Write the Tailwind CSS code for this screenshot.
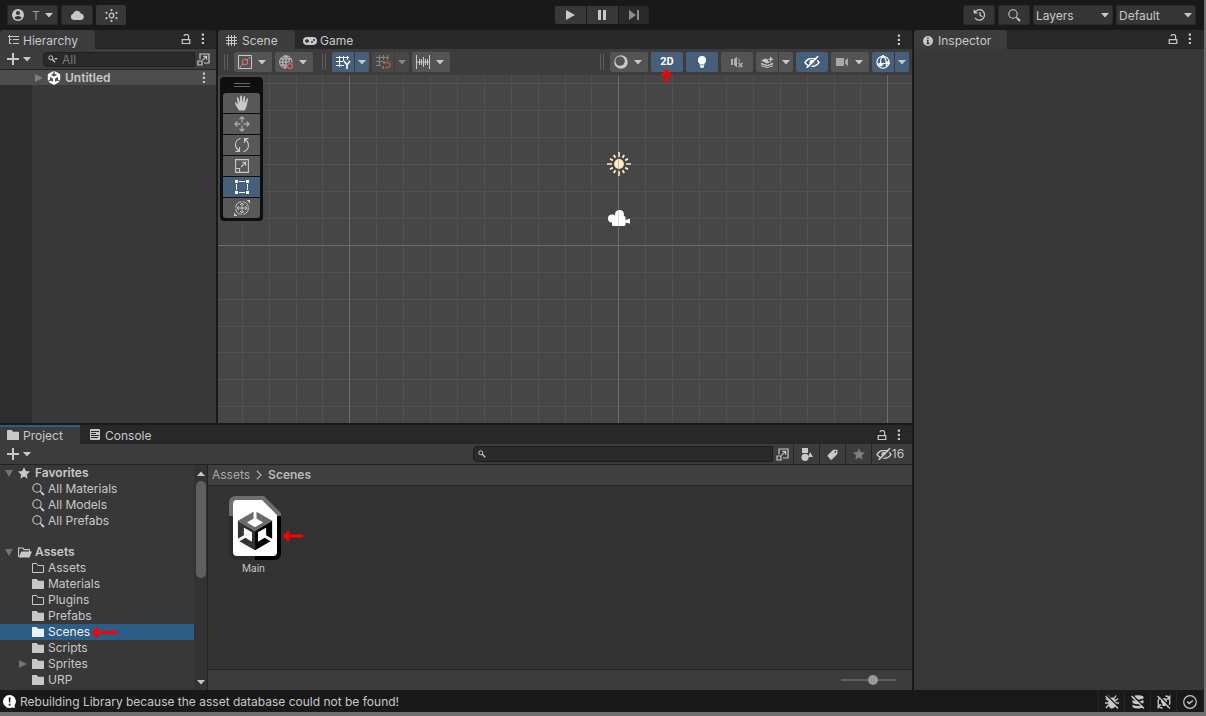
<!DOCTYPE html>
<html lang="en">
<head>
<meta charset="utf-8">
<title>Scene Editor</title>
<script src="https://cdn.jsdelivr.net/npm/@tailwindcss/browser@4"></script>
</head>
<body class="h-screen overflow-hidden bg-[#6e6e6e] font-['Inter',sans-serif] text-[12px] leading-4 text-[#c8c8c8]">
<svg width="0" height="0" class="absolute" aria-hidden="true">
  <defs>
    <symbol id="caret" viewBox="0 0 8 5"><path d="M0 0h8L4 4.6z" fill="currentColor"/></symbol>
    <symbol id="dots" viewBox="0 0 4 12"><path d="M.8.5h2.2v2.2H.8zM.8 4.7h2.2v2.2H.8zM.8 8.9h2.2v2.2H.8z" fill="currentColor"/></symbol>
    <symbol id="lock" viewBox="0 0 10 12"><path d="M1.2 6.6h7.6v3.9H1.2zM7.6 6.4V3.4Q7.6 1.6 5.9 1.6H4.6Q3 1.6 3 3.2" fill="none" stroke="currentColor" stroke-width="1.2"/></symbol>
    <symbol id="plus" viewBox="0 0 12 12"><path d="M6 0v12M0 6h12" stroke="currentColor" stroke-width="2"/></symbol>
    <symbol id="mag" viewBox="0 0 13 13"><circle cx="5" cy="5" r="4.2" fill="none" stroke="currentColor" stroke-width="1.1"/><path d="M8 8l1.4 1.4" stroke="currentColor" stroke-width="1.1"/><path d="M9.2 9.2l2.8 2.8" stroke="currentColor" stroke-width="2"/></symbol>
    <symbol id="magsm" viewBox="0 0 8 8"><circle cx="2.800" cy="2.800" r="2" fill="none" stroke="currentColor"/><path d="M4.300 4.300L7.300 7.300" stroke="currentColor" stroke-width="1.300"/></symbol>
    <symbol id="pop" viewBox="0 0 13 13"><path d="M3 6.2V1h9v9H7M1 8h4v4H1z" fill="none" stroke="currentColor" stroke-width="1.2"/><path d="M5.4 7.4L9.6 3.4M6.2 3.4h3.4v3.4" fill="none" stroke="currentColor" stroke-width="1.2"/></symbol>
    <symbol id="folder" viewBox="0 0 13 11"><path d="M0 1Q0 0 .8 0H4.700L6 1.800h5.300q.7 0 .7.7v6.800q0 .7-.7.7H.7q-.7 0-.7-.7z" fill="currentColor"/></symbol>
    <symbol id="folderline" viewBox="0 0 13 11"><path d="M.500.500h4.200L5.900 2.500h5.600v7H.500z" fill="none" stroke="currentColor"/></symbol>
    <symbol id="star" viewBox="0 0 12 12"><path d="M6 .2l1.8 3.9 4.2.4-3.2 2.9.9 4.3L6 9.4l-3.7 2.3.9-4.3L0 4.500l4.2-.4z" fill="currentColor"/></symbol>
    <mask id="slashgap"><rect width="16" height="12" fill="#fff"/><path d="M4.300 12.500L15 1.700" stroke="#000" stroke-width="1.400"/></mask>
    <symbol id="eyeoff" viewBox="0 0 16 12"><g mask="url(#slashgap)"><path d="M1 6.600C3 3.400 5.600 2.300 8 2.300s5 1.100 7 4.300C13 9.300 10.500 10.300 8 10.300s-5-1-7-3.700z" fill="none" stroke="currentColor" stroke-width="1.500"/><circle cx="8" cy="6.200" r="2.500" fill="currentColor"/></g><path d="M2.500 12L14 .3" stroke="currentColor" stroke-width="1.600"/></symbol>
    <symbol id="cube" viewBox="0 0 24 24"><path d="M12.93 4.290l3.800 2.200c.14.080.14.290 0 .370l-4.520 2.600a.42.42 0 0 1-.42 0L7.270 6.850c-.14-.07-.14-.290 0-.370l3.800-2.190V0L1.380 5.600v11.190l3.710-2.140v-4.390c0-.16.180-.27.320-.18l4.520 2.600c.13.080.21.220.21.370v5.210c0 .16-.18.270-.32.180l-3.800-2.190-3.710 2.150L12 24l9.700-5.600-3.720-2.150-3.800 2.200c-.13.080-.32-.03-.32-.190v-5.210c0-.15.090-.29.220-.37l4.510-2.600c.14-.08.330.02.320.180v4.390l3.720 2.140V5.600L12.930 0z" fill="currentColor"/></symbol>
    <clipPath id="facetop"><path d="M0 4.800L12 12 24 4.800V0H0z"/></clipPath>
    <clipPath id="faceleft"><path d="M0 4.800L12 12v12H0z"/></clipPath>
    <clipPath id="faceright"><path d="M24 4.800L12 12v12h12z"/></clipPath>
    <symbol id="grip" viewBox="0 0 4 16"><path d="M.5 0v16M3.500 0v16" stroke="#5f5f5f"/></symbol>
  </defs>
</svg>

<div class="flex h-full flex-col pr-[2px] pb-1">
<div class="flex min-h-0 flex-1 flex-col bg-[#191919]">

  <header class="grid h-[30px] shrink-0 grid-cols-[1fr_auto_1fr] items-center pr-2 pl-[7px]">
    <div class="flex gap-[3px]">
      <button aria-label="Account" class="flex h-5 w-[51px] items-center rounded-[2px] border border-[#2a2a2a] bg-[#353535] pr-1 pl-1">
        <svg class="size-3" viewBox="0 0 12 12"><circle cx="6" cy="6" r="6" fill="#c8c8c8"/><circle cx="6" cy="4" r="2.100" fill="#353535"/><path d="M2.300 8.900Q3 6.900 6 6.900t3.700 2Q8 10.600 6 10.600T2.300 8.900z" fill="#353535"/></svg>
        <span class="mr-auto ml-2 pt-0.5 text-[#9a9a9a]">T</span><svg class="h-[5px] w-2"><use href="#caret"/></svg>
      </button>
      <button aria-label="Cloud" class="flex h-5 w-8 items-center justify-center rounded-[2px] border border-[#2a2a2a] bg-[#353535]">
        <svg class="h-3 w-[15px]" viewBox="0 0 15 12"><path d="M3.500 11A3.200 3.200 0 0 1 3 4.800 4.300 4.300 0 0 1 11 4.400 3.400 3.400 0 0 1 11.500 11z" fill="currentColor"/></svg>
      </button>
      <button aria-label="Settings" class="flex h-5 w-[30px] items-center justify-center rounded-[2px] bg-[#383838]">
        <svg class="size-[13px]" viewBox="0 0 13 13" fill="currentColor"><circle cx="6.500" cy="6.500" r="2.300" fill="none" stroke="currentColor" stroke-width="1.300"/><circle cx="6.500" cy="1.100" r="1.100"/><circle cx="6.500" cy="11.900" r="1.100"/><circle cx="1.500" cy="3.800" r="1.100"/><circle cx="11.500" cy="3.800" r="1.100"/><circle cx="1.500" cy="9.200" r="1.100"/><circle cx="11.500" cy="9.200" r="1.100"/></svg>
      </button>
    </div>
    <div class="flex gap-px">
      <button aria-label="Play" class="flex h-[18px] w-[31px] items-center justify-center rounded-l-[2px] bg-[#383838]"><svg class="h-2.5 w-[9px]" viewBox="0 0 9 10"><path d="M0 0l9 5-9 5z" fill="currentColor"/></svg></button>
      <button aria-label="Pause" class="flex h-[18px] w-[31px] items-center justify-center bg-[#383838]"><svg class="h-2.5 w-[9px]" viewBox="0 0 9 10"><path d="M0 0h3v10H0zM5 0h3v10H5z" fill="currentColor"/></svg></button>
      <button aria-label="Step" class="flex h-[18px] w-[30px] items-center justify-center rounded-r-[2px] bg-[#2a2a2a] text-[#8c8c8c]"><svg class="h-2.5 w-2.5" viewBox="0 0 10 10"><path d="M0 0l7 5-7 5zM8 0h2v10H8z" fill="currentColor"/></svg></button>
    </div>
    <div class="flex justify-end gap-[3px]">
      <button aria-label="History" class="flex h-5 w-8 items-center justify-center rounded-[2px] border border-[#2a2a2a] bg-[#353535]">
        <svg class="h-3 w-[13px]" viewBox="0 0 13 12" fill="none" stroke="currentColor" stroke-width="1.300"><path d="M1.800 3.400A5.200 5.200 0 1 1 2 8.800M1.300.8v3h3.200M7 3v3.200l2.400 1.500"/></svg>
      </button>
      <button aria-label="Search" class="flex h-5 w-8 items-center justify-center rounded-[2px] border border-[#2a2a2a] bg-[#353535]"><svg class="size-[13px]"><use href="#mag"/></svg></button>
      <label class="relative flex h-5 w-20 items-center">
        <select aria-label="Layers" class="h-5 w-full appearance-none rounded-[2px] border border-[#2a2a2a] bg-[#353535] pt-0.5 pl-0.5 text-[12px]"><option>Layers</option></select>
        <svg class="pointer-events-none absolute right-1 h-[5px] w-2"><use href="#caret"/></svg>
      </label>
      <label class="relative flex h-5 w-20 items-center">
        <select aria-label="Layout" class="h-5 w-full appearance-none rounded-[2px] border border-[#2a2a2a] bg-[#353535] pt-0.5 pl-0.5 text-[12px]"><option>Default</option></select>
        <svg class="pointer-events-none absolute right-1 h-[5px] w-2"><use href="#caret"/></svg>
      </label>
    </div>
  </header>

  <main class="flex min-h-0 flex-1 gap-0.5">
    <div class="flex min-w-0 flex-1 flex-col gap-0.5">
      <div class="flex min-h-0 flex-1 gap-0.5">

        <section aria-label="Hierarchy" class="flex w-[216px] shrink-0 flex-col overflow-hidden rounded-t-[3px] bg-[#383838]">
          <div class="flex h-[19px] shrink-0 items-stretch bg-[#282828]">
            <h2 class="flex w-[95px] items-center gap-1 rounded-t-[3px] bg-[#3c3c3c] pt-0.5 pl-2">
              <svg class="mb-0.5 h-2.5 w-[11px]" viewBox="0 0 11 10" fill="none" stroke="currentColor"><path d="M3 1.500h8M5 4.500h6M5 8.500h6M1.500 0v9M0 1.500h3M1.500 4.500h2M1.500 8.500h2"/></svg>Hierarchy</h2>
            <div class="flex flex-1 items-center justify-end gap-2.5 border-b border-[#232323] pr-[11px]">
              <button aria-label="Lock hierarchy"><svg class="h-3 w-2.5"><use href="#lock"/></svg></button>
              <button aria-label="Hierarchy menu"><svg class="h-3 w-1"><use href="#dots"/></svg></button>
            </div>
          </div>
          <div class="flex h-[21px] shrink-0 items-center border-b border-[#232323] bg-[#3c3c3c] pr-1 pl-[7px]">
            <button aria-label="Create" class="flex items-center gap-1"><svg class="size-3"><use href="#plus"/></svg><svg class="h-[5px] w-2"><use href="#caret"/></svg></button>
            <label class="ml-3 flex h-[15px] min-w-0 flex-1 items-center gap-0.5 rounded-l-[4px] border border-[#212121] bg-[#2a2a2a] pl-1">
              <svg class="h-2 w-2.5 shrink-0" viewBox="0 0 10 8"><circle cx="2.800" cy="2.800" r="2" fill="none" stroke="currentColor"/><path d="M4.300 4.300l2.700 3" stroke="currentColor" stroke-width="1.300"/><path d="M6.200 3h3.600L8 5z" fill="currentColor"/></svg>
              <input aria-label="Search hierarchy" placeholder="All" class="w-full min-w-0 bg-transparent pl-0.5 leading-3 outline-none placeholder:text-[#7a7a7a]">
            </label>
            <button aria-label="Open search" class="flex h-[15px] w-[17px] items-center justify-center"><svg class="size-[13px]"><use href="#pop"/></svg></button>
          </div>
          <div class="flex h-[15px] shrink-0 items-center bg-[#4d4d4d] pr-2.5 pl-[35px] font-semibold">
            <svg class="h-2 w-2" viewBox="0 0 8 8"><path d="M0 0l8 4-8 4z" fill="#7c7c7c"/></svg>
            <svg class="mr-1 ml-1 size-3.5 text-white"><use href="#cube"/></svg>
            <span class="flex-1">Untitled</span>
            <button aria-label="Scene menu"><svg class="h-3 w-1"><use href="#dots"/></svg></button>
          </div>
          <div class="w-8 flex-1 bg-[#2d2d2d]"></div>
        </section>

        <section aria-label="Scene view" class="flex min-w-0 flex-1 flex-col overflow-hidden rounded-t-[3px] bg-[#464646]">
          <div class="flex h-[19px] shrink-0 items-stretch bg-[#282828]">
            <h2 class="flex w-[77px] items-center gap-[5px] rounded-t-[3px] bg-[#3c3c3c] pt-0.5 pl-2"><svg class="size-[11px]" viewBox="0 0 11 11"><path d="M2.500 0v11M5.500 0v11M8.500 0v11M0 2.500h11M0 5.500h11M0 8.500h11" stroke="currentColor"/></svg>Scene</h2>
            <button class="flex items-center gap-[3px] pt-0.5 pl-2"><svg class="h-2 w-3.5" viewBox="0 0 14 8"><rect width="14" height="8" rx="4" fill="currentColor"/><path d="M4 2v4M2 4h4" stroke="#282828" stroke-width="1.300"/><circle cx="9" cy="5" r=".9" fill="#282828"/><circle cx="11" cy="3" r=".9" fill="#282828"/></svg>Game</button>
            <button aria-label="Scene view menu" class="mr-[11px] ml-auto"><svg class="h-3 w-1"><use href="#dots"/></svg></button>
          </div>
          <div class="flex h-[26px] shrink-0 items-center gap-[3px] bg-[#3c3c3c] pr-[3px] pl-1.5">
            <svg class="mr-[3px] h-4 w-1"><use href="#grip"/></svg>
            <button aria-label="Tool handle position" class="flex h-5 w-[38px] items-center gap-1.5 rounded-[2px] bg-[#545454] pl-1"><svg class="size-3.5" viewBox="0 0 14 14" fill="none" stroke="currentColor"><path d="M.500.500h13v13H.500z"/><path d="M2 12l3-3M9 5l3-3" stroke-dasharray="1.500 1"/><circle cx="7" cy="7" r="2.600" stroke="#e8694a" stroke-width="1.200"/></svg><svg class="h-[5px] w-2"><use href="#caret"/></svg></button>
            <button aria-label="Tool handle rotation" class="flex h-5 w-[38px] items-center gap-1.5 rounded-[2px] bg-[#545454] pl-1"><svg class="size-3.5" viewBox="0 0 14 14" fill="none" stroke="currentColor"><path d="M13 7.500A6.200 6.200 0 1 0 7 13.200M7 .8Q3.500 3 3.500 7T7 13.200M7 .8q3.200 2.200 3.500 6M7 .8v12M1.500 4h11M.8 7h9.500M1.500 10H7"/><circle cx="11" cy="11" r="2.400" stroke="#e8694a" stroke-width="1.200"/></svg><svg class="h-[5px] w-2"><use href="#caret"/></svg></button>
            <svg class="mr-[3px] ml-1.5 h-4 w-1 shrink-0"><use href="#grip"/></svg>
            <div class="flex h-5 gap-px">
              <button aria-label="Grid" class="flex w-[22px] items-center justify-center rounded-l-[2px] bg-[#46607c] text-white"><svg class="h-3.5 w-[15px]" viewBox="0 0 15 14" fill="none" stroke="currentColor"><path d="M3.500 1v11M7.500 1v5M11.500 1v4M0 2.500h13M0 6.500h7M0 10.500h8"/><path d="M8 6l3 4 3-4M11 10v4" stroke-width="1.600"/></svg></button>
              <button aria-label="Grid options" class="flex w-3.5 items-center justify-center rounded-r-[2px] bg-[#46607c]"><svg class="h-[5px] w-2"><use href="#caret"/></svg></button>
            </div>
            <div class="flex h-5 gap-px">
              <button aria-label="Snapping" class="flex w-[22px] items-center justify-center rounded-l-[2px] bg-[#484848] text-[#858585]"><svg class="h-3.5 w-[15px]" viewBox="0 0 15 14" fill="none" stroke="currentColor"><path d="M3.500 0v11M7.500 0v5M11.500 0v5M0 2.500h13M0 6.500h7M0 10.500h5"/><path d="M7 7.500h2M6 12.500h2" stroke-width="2"/><path d="M9 7.500h2.500a2.500 2.500 0 0 1 0 5H9" stroke="#a8523c" stroke-width="1.800"/></svg></button>
              <button aria-label="Snapping options" class="flex w-3.5 items-center justify-center rounded-r-[2px] bg-[#484848] text-[#858585]"><svg class="h-[5px] w-2"><use href="#caret"/></svg></button>
            </div>
            <button aria-label="Snap increment" class="flex h-5 w-[38px] items-center gap-1.5 rounded-[2px] bg-[#545454] pl-1"><svg class="h-3.5 w-3.5" viewBox="0 0 14 14"><path d="M.500 0v14M13.500 0v14M3.500 4v6M5.500 4v6M7.500 2v10M9.500 4v6M11.500 4v6M0 7h14" stroke="currentColor"/></svg><svg class="h-[5px] w-2"><use href="#caret"/></svg></button>

            <svg class="mr-[3px] ml-auto h-4 w-1"><use href="#grip"/></svg>
            <button aria-label="Draw mode" class="flex h-5 w-[38px] items-center gap-1.5 rounded-[2px] bg-[#545454] pl-1"><svg class="size-3.5" viewBox="0 0 14 14"><circle cx="7" cy="7" r="6.800" fill="#c8c8c8"/><circle cx="6.100" cy="6.100" r="4.700" fill="#545454"/></svg><svg class="h-[5px] w-2"><use href="#caret"/></svg></button>
            <button class="relative h-5 w-8 rounded-[2px] bg-[#46607c] font-['Roboto',sans-serif] text-[11px] font-bold text-white">2D
              <svg class="absolute top-[17px] left-2.5 z-10 h-3.5 w-3" viewBox="0 0 12 14" fill="none" stroke="#fe0000" stroke-width="2.800"><path d="M5.500 14V2.500M1 6.500L5.500 2l4.500 4.500" stroke-linejoin="round"/></svg></button>
            <button aria-label="Scene lighting" class="flex h-5 w-8 items-center justify-center rounded-[2px] bg-[#46607c] text-white"><svg class="h-3 w-2" viewBox="0 0 8 12"><path d="M4 0a4 4 0 0 1 2.600 7.200V8.600H1.400V7.200A4 4 0 0 1 4 0zM2 9.300h4v1.200L5 12H3l-1-1.500z" fill="currentColor"/></svg></button>
            <button aria-label="Scene audio" class="flex h-5 w-8 items-center justify-center rounded-[2px] bg-[#545454] text-[#b0b0b0]"><svg class="h-3 w-3" viewBox="0 0 12 12" fill="none" stroke="currentColor"><path d="M0 3h2v6H0zM3 3L6 .8v10.400L3 9z" fill="currentColor" stroke="none"/><path d="M7.300 2.500q1.600 1.300 1 3.500" /><path d="M7.500 6.800l4 4.500M11.500 6.800l-4 4.500" stroke-width="1.400"/></svg></button>
            <div class="flex h-5 gap-px">
              <button aria-label="Effects" class="flex w-[22px] items-center justify-center rounded-l-[2px] bg-[#545454]"><svg class="h-3 w-[13px]" viewBox="0 0 13 12"><path d="M0 4.500L4.500 2.500 6.500 3.300 7.500 5.500 10 6 6 7.500zM0 6.700l6 2.400 6-2.400v1.500l-6 2.300L0 8.200zM0 9.200l6 2 6-2v1L6 12 0 10.200zM9.800 0l.9 2.400 2.300.8-2.300.9-.9 2.300-.8-2.300-2.400-.9L9 2.400z" fill="currentColor"/></svg></button>
              <button aria-label="Effects options" class="flex w-3.5 items-center justify-center rounded-r-[2px] bg-[#545454]"><svg class="h-[5px] w-2"><use href="#caret"/></svg></button>
            </div>
            <button aria-label="Scene visibility" class="flex h-5 w-8 items-center justify-center rounded-[2px] bg-[#46607c] text-white"><svg class="h-3 w-4"><use href="#eyeoff"/></svg></button>
            <button aria-label="Camera" class="flex h-5 w-[38px] items-center gap-1.5 rounded-[2px] bg-[#545454] pl-[5px]"><svg class="h-2 w-[13px] text-[#a8a8a8]" viewBox="0 0 13 8"><path d="M0 0h8v8H0zM9 2.500l3-2.500v8L9 5.500z" fill="currentColor"/></svg><svg class="h-[5px] w-2"><use href="#caret"/></svg></button>
            <div class="flex h-5 gap-px">
              <button aria-label="Gizmos" class="flex w-[22px] items-center justify-center rounded-l-[2px] bg-[#46607c] text-white"><svg class="h-3.5 w-3.5" viewBox="0 0 14 14" fill="none" stroke="currentColor" stroke-width="1.100"><circle cx="7" cy="7.200" r="6"/><path d="M7 1Q3.500 4 5 9M7 1q4 3 3.300 10M1 8.500Q6 10.500 13 6.500"/><circle cx="7" cy="1.500" r="1.500" fill="currentColor" stroke="none"/><circle cx="4.800" cy="9.500" r="1.900" fill="currentColor" stroke="none"/><circle cx="12.300" cy="8" r="1.600" fill="currentColor" stroke="none"/></svg></button>
              <button aria-label="Gizmo options" class="flex w-3.5 items-center justify-center rounded-r-[2px] bg-[#46607c]"><svg class="h-[5px] w-2"><use href="#caret"/></svg></button>
            </div>
          </div>

          <div class="relative min-h-0 flex-1 overflow-hidden">
            <!-- Canvas grid: minor lines inside a repeating tile, brighter lines on the tile edge -->
            <svg class="absolute inset-0 size-full" shape-rendering="crispEdges" aria-hidden="true">
              <defs><pattern id="cells" x="131" y="170" width="269" height="269" patternUnits="userSpaceOnUse">
                <path d="M27.500 0v269M54.500 0v269M81.500 0v269M108.500 0v269M135.500 0v269M162.500 0v269M189.500 0v269M216.500 0v269M242.500 0v269M0 27.500h269M0 54.500h269M0 81.500h269M0 107.500h269M0 134.500h269M0 161.500h269M0 188.500h269M0 215.500h269M0 242.500h269" stroke="#515151"/>
                <path d="M.500 0v269M0 .500h269" stroke="#6c6c6c"/></pattern></defs>
              <rect width="100%" height="100%" fill="url(#cells)"/>
            </svg>
            <!-- Light and camera gizmos -->
            <svg class="absolute top-[77px] left-[389px] size-6" viewBox="0 0 24 24"><path d="M12 0v5M12 19v5M0 12h5M19 12h5" stroke="#fcebc4" stroke-width="1.600"/><path d="M18.200 8.400l2.800-1.600M15.600 5.800l1.600-2.800M8.400 5.800L6.800 3M5.800 8.400L3 6.800M5.800 15.600L3 17.200M8.400 18.200l-1.600 2.800M15.600 18.200l1.600 2.800M18.200 15.600l2.800 1.600" stroke="#fcebc4" stroke-width="1.900"/><circle cx="12" cy="12" r="4.900" fill="#fcebc4"/><path d="M11.500 6v12" stroke="#8a8a7c" stroke-opacity=".4"/></svg>
            <svg class="absolute top-[135px] left-[390px] h-4 w-[22px]" viewBox="0 0 22 16" fill="#fff"><circle cx="4" cy="8.500" r="4"/><circle cx="11.500" cy="4.500" r="4.500"/><rect x="4" y="6" width="13.500" height="10" rx="1.500"/><path d="M16 10.500l2-.5 4-1.500v5l-4-.8-2 .3z"/><path d="M10.500 0v16" stroke="#8a8a8a" stroke-opacity=".3"/></svg>

            <div role="toolbar" aria-label="Tools" class="absolute top-0.5 left-0.5 flex w-[43px] flex-col gap-px rounded-[4px] bg-[#0f0f0f] px-[3px] pb-[3px]">
              <svg class="mx-auto mt-1.5 mb-[5px] h-1 w-4" viewBox="0 0 16 4"><path d="M0 .500h16M0 3.500h16" stroke="#666"/></svg>
              <button aria-label="Hand" class="flex h-5 items-center justify-center rounded-t-[3px] bg-[#585858]"><svg class="size-4" viewBox="0 0 16 16"><path d="M5.200 15.500C4 13.500 2 11.500 1 8.300.8 7.300 1.900 6.900 2.400 7.700L4 9.800 2.800 3.200c-.2-1.100 1.300-1.400 1.600-.3L5.900 7.500 6.100 1.300c0-1.200 1.700-1.200 1.800 0L8.300 7.300 9.600 1.800c.3-1.100 1.800-.8 1.600.3L10.700 8l2-4.100c.5-1 1.700-.5 1.400.6C13 8 13 11.500 11.300 14.300L10.900 15.500z" fill="currentColor"/></svg></button>
              <button aria-label="Move" class="flex h-5 items-center justify-center bg-[#585858] text-[#a9a9a9]"><svg class="size-4" viewBox="0 0 16 16" fill="none" stroke="currentColor" stroke-width="1.300"><path d="M8 1v5.500M8 9.500V15M1 8h5.500M9.500 8H15M5.500 3.300L8 .9l2.500 2.400M5.500 12.700L8 15.100l2.500-2.400M3.300 5.500L.9 8l2.400 2.500M12.700 5.500L15.100 8l-2.400 2.500"/></svg></button>
              <button aria-label="Rotate" class="flex h-5 items-center justify-center bg-[#585858]"><svg class="size-4" viewBox="0 0 16 16" fill="none" stroke="currentColor" stroke-width="1.200"><path d="M6.500 1.200C2.500 2.500.8 6 1.800 9.500 2.300 11.200 3.200 12.500 5 13.800M9.500 14.800c4-1.300 5.700-4.800 4.700-8.300-.5-1.700-1.400-3-3.200-4.300M1.500 14.300h4V10M14.500 1.700h-4V6"/></svg></button>
              <button aria-label="Scale" class="flex h-5 items-center justify-center bg-[#585858]"><svg class="size-3.5" viewBox="0 0 14 14" fill="none" stroke="currentColor" stroke-width="1.100"><path d="M.6.6h12.800v12.800H.6zM.6 9.500h4v4M6 8l4.500-4.500M7 3.300h3.700V7"/></svg></button>
              <button aria-label="Rect" aria-pressed="true" class="flex h-5 items-center justify-center bg-[#46607c] text-white"><svg class="size-3.5" viewBox="0 0 14 14"><path d="M0 0h3v3H0zM11 0h3v3h-3zM0 11h3v3H0zM11 11h3v3h-3z" fill="currentColor"/><path d="M4 1.500h6M4 12.500h6M1.500 4v6M12.500 4v6" stroke="currentColor"/></svg></button>
              <button aria-label="Transform" class="flex h-5 items-center justify-center rounded-b-[3px] bg-[#585858]"><svg class="size-4" viewBox="0 0 16 16" fill="none" stroke="currentColor"><circle cx="8" cy="8" r="6.300" stroke-dasharray="8.500 1.400"/><path d="M8 3v10M3 8h10M6 5l2-2 2 2M6 11l2 2 2-2M5 6L3 8l2 2M11 6l2 2-2 2"/><path d="M12.500 0H16v3.500zM0 12.500V16h3.500z" fill="currentColor" stroke="none"/></svg></button>
            </div>
          </div>
        </section>
      </div>

      <section aria-label="Project" class="flex h-[265px] shrink-0 flex-col overflow-hidden rounded-tr-[3px] bg-[#383838]">
        <div class="flex h-[19px] shrink-0 items-stretch bg-[#282828]">
          <h2 class="flex w-20 items-center gap-[3px] border-t-2 border-[#2c5d87] bg-[#3c3c3c] pl-[7px]"><svg class="h-[11px] w-[13px]"><use href="#folder"/></svg>Project</h2>
          <button class="flex items-center gap-1 pt-0.5 pl-2.5"><svg class="mb-0.5 size-[11px]" viewBox="0 0 11 11"><rect width="10" height="11" rx="1" fill="currentColor"/><path d="M1 2.500h8M1 4.500h5M1 6.500h8M1 8.500h7" stroke="#282828"/></svg>Console</button>
          <div class="flex flex-1 items-center justify-end gap-2.5 pr-[11px]">
            <button aria-label="Lock project"><svg class="h-3 w-2.5"><use href="#lock"/></svg></button>
            <button aria-label="Project menu"><svg class="h-3 w-1"><use href="#dots"/></svg></button>
          </div>
        </div>
        <div class="flex h-[21px] shrink-0 items-center border-b border-[#232323] bg-[#3c3c3c] pl-[7px]">
          <button aria-label="Create asset" class="flex items-center gap-1"><svg class="size-3"><use href="#plus"/></svg><svg class="h-[5px] w-2"><use href="#caret"/></svg></button>
          <label class="ml-auto flex h-4 w-[300px] items-center rounded-l-[4px] border border-[#1c1c1c] bg-[#2a2a2a] pl-1"><svg class="size-2 shrink-0"><use href="#magsm"/></svg><input aria-label="Search project" class="w-full min-w-0 bg-transparent leading-3 outline-none"></label>
          <button aria-label="Open project search" class="mr-0.5 flex h-4 w-[18px] items-center justify-center"><svg class="size-[13px]"><use href="#pop"/></svg></button>
          <div class="flex h-full divide-x divide-[#262626] border-l border-[#262626]">
            <button aria-label="Filter by type" class="flex w-[26px] items-center justify-center"><svg class="h-[13px] w-3" viewBox="0 0 12 13" fill="currentColor"><path d="M1 0h6v5H1zM9 4l3 5H7z"/><circle cx="4" cy="9.300" r="3.600"/></svg></button>
            <button aria-label="Filter by label" class="flex w-[26px] items-center justify-center"><svg class="size-[11px]" viewBox="0 0 11 11"><path d="M10.500.8L10.300 5 5 10.600Q4 11 3.200 10.200L.8 7.600Q.2 6.600.8 6L6.200.7z" fill="currentColor"/><circle cx="8.300" cy="2.800" r=".9" fill="#3c3c3c"/></svg></button>
            <button aria-label="Save search" class="flex w-[26px] items-center justify-center text-[#7d7d7d]"><svg class="size-3"><use href="#star"/></svg></button>
            <button aria-label="16 hidden packages" class="flex w-10 items-center justify-center pr-1"><svg class="h-3 w-4"><use href="#eyeoff"/></svg>16</button>
          </div>
        </div>
        <div class="flex min-h-0 flex-1">
          <nav aria-label="Folders" class="w-[194px] shrink-0">
            <ul>
              <li class="flex h-4 items-center pl-[5px] font-semibold"><svg class="h-[7px] w-2" viewBox="0 0 8 7"><path d="M0 0h8L4 7z" fill="#737373"/></svg><svg class="mr-[5px] ml-[5px] size-3"><use href="#star"/></svg>Favorites</li>
              <li class="flex h-4 items-center gap-[3px] pl-8"><svg class="size-[13px]"><use href="#mag"/></svg>All Materials</li>
              <li class="flex h-4 items-center gap-[3px] pl-8"><svg class="size-[13px]"><use href="#mag"/></svg>All Models</li>
              <li class="flex h-4 items-center gap-[3px] pl-8"><svg class="size-[13px]"><use href="#mag"/></svg>All Prefabs</li>
            </ul>
            <ul class="mt-[15px]">
              <li class="flex h-4 items-center pl-[5px] font-semibold"><svg class="h-[7px] w-2" viewBox="0 0 8 7"><path d="M0 0h8L4 7z" fill="#737373"/></svg><svg class="mr-[3px] ml-[5px] h-[11px] w-3.5" viewBox="0 0 14 11"><path d="M.6 10V1H5l1 1.600h5.400V5" fill="none" stroke="currentColor" stroke-width="1.100"/><path d="M3.200 4.500H14L11.500 10.500H.8z" fill="currentColor"/></svg>Assets</li>
              <li class="flex h-4 items-center gap-[3px] pl-8"><svg class="h-[11px] w-[13px]"><use href="#folderline"/></svg>Assets</li>
              <li class="flex h-4 items-center gap-[3px] pl-8"><svg class="h-[11px] w-[13px]"><use href="#folder"/></svg>Materials</li>
              <li class="flex h-4 items-center gap-[3px] pl-8"><svg class="h-[11px] w-[13px]"><use href="#folderline"/></svg>Plugins</li>
              <li class="flex h-4 items-center gap-[3px] pl-8"><svg class="h-[11px] w-[13px]"><use href="#folder"/></svg>Prefabs</li>
              <li class="flex h-4 items-center gap-[3px] bg-[#2c5d87] pl-8 text-[#f0f0f0]"><svg class="h-[11px] w-[13px]"><use href="#folder"/></svg>Scenes<svg class="-ml-0.5 h-3 w-[27px]" viewBox="0 0 27 12" fill="none" stroke="#fe0000" stroke-width="2.800"><path d="M27 6.500H2.500M7 2L2.500 6.500 7 11" stroke-linejoin="round"/></svg></li>
              <li class="flex h-4 items-center gap-[3px] pl-8"><svg class="h-[11px] w-[13px]"><use href="#folder"/></svg>Scripts</li>
              <li class="flex h-4 items-center gap-[3px] pl-[19px]"><svg class="mr-0.5 h-2 w-2" viewBox="0 0 8 8"><path d="M0 0l8 4-8 4z" fill="#737373"/></svg><svg class="h-[11px] w-[13px]"><use href="#folder"/></svg>Sprites</li>
              <li class="flex h-4 items-center gap-[3px] pl-8"><svg class="h-[11px] w-[13px]"><use href="#folder"/></svg>URP</li>
            </ul>
          </nav>
          <div class="flex w-3.5 shrink-0 flex-col items-center border-r border-[#222] bg-[#333] pt-1.5 pb-[5px] pl-px">
            <svg class="h-[5px] w-2 rotate-180"><use href="#caret"/></svg>
            <div class="mt-[5px] h-[97px] w-2.5 rounded-full bg-[#5f5f5f]"></div>
            <svg class="mt-auto h-[5px] w-2"><use href="#caret"/></svg>
          </div>
          <div class="flex min-w-0 flex-1 flex-col bg-[#333]">
            <div class="flex h-[21px] items-center gap-1.5 border-b border-[#262626] bg-[#3f3f3f] pl-1 text-[#a9a9a9]"><a href="#assets">Assets</a><svg class="h-2.5 w-1.5" viewBox="0 0 6 10"><path d="M.8.8L5 5 .8 9.200" fill="none" stroke="currentColor" stroke-width="1.300"/></svg><b class="font-semibold text-[#b8b8b8]">Scenes</b></div>
            <div class="flex-1 pt-2.5 pl-[21px]">
              <div class="flex items-center gap-px">
                <svg class="h-16 w-[52px]" viewBox="0 0 52 64">
                  <path d="M0 20h26v44H7Q0 64 0 57z" fill="#2a2a2a"/>
                  <path d="M26 16h26v41q0 7-7 7H26z" fill="#000"/>
                  <path d="M7 0H35L52 17V20H0V7Q0 0 7 0z" fill="#6e6e6e"/>
                  <path d="M8 4H33L48 19V56q0 4-4 4H8q-4 0-4-4V8q0-4 4-4z" fill="#fff"/>
                  <g clip-path="url(#sheet)">
                    <g transform="translate(6.700 15.700) scale(1.610)">
                      <g clip-path="url(#facetop)" color="#6a6a6a"><use href="#cube" width="24" height="24"/></g>
                      <g clip-path="url(#faceleft)" color="#333"><use href="#cube" width="24" height="24"/></g>
                      <g clip-path="url(#faceright)" color="#000"><use href="#cube" width="24" height="24"/></g>
                    </g>
                  </g>
                  <defs><clipPath id="sheet"><path d="M4 4h44v56H4z"/></clipPath></defs>
                </svg>
                <svg class="mt-4 h-3 w-[21px]" viewBox="0 0 21 12" fill="none" stroke="#fe0000" stroke-width="2.800"><path d="M21 6H2.500M7 1.500L2.500 6 7 10.500" stroke-linejoin="round"/></svg>
              </div>
              <p class="w-[49px] text-center text-[10px]">Main</p>
            </div>
            <div class="flex h-[21px] items-center justify-end border-t border-[#262626] bg-[#3c3c3c] pr-4">
              <input type="range" aria-label="Icon size" min="0" max="100" value="60" class="h-2.5 w-[55px] appearance-none bg-[linear-gradient(#5e5e5e,#5e5e5e)] bg-[length:100%_2px] bg-center bg-no-repeat [&::-webkit-slider-thumb]:size-2.5 [&::-webkit-slider-thumb]:appearance-none [&::-webkit-slider-thumb]:rounded-full [&::-webkit-slider-thumb]:bg-[#999]">
            </div>
          </div>
        </div>
      </section>
    </div>

    <section aria-label="Inspector" class="flex w-[290px] shrink-0 flex-col overflow-hidden rounded-t-[3px] bg-[#383838]">
      <div class="flex h-[19px] items-stretch bg-[#282828]">
        <h2 class="flex w-[93px] items-center gap-[5px] rounded-t-[3px] bg-[#3c3c3c] pt-0.5 pl-[9px]"><svg class="size-2.5" viewBox="0 0 10 10"><circle cx="5" cy="5" r="5" fill="currentColor"/><path d="M5 1.500v1.500M3.800 4.500H5v3M3.500 7.700h3" stroke="#3c3c3c" stroke-width="1.300"/></svg>Inspector</h2>
        <div class="flex flex-1 items-center justify-end gap-2.5 border-b border-[#232323] pr-3">
          <button aria-label="Lock inspector"><svg class="h-3 w-2.5"><use href="#lock"/></svg></button>
          <button aria-label="Inspector menu"><svg class="h-3 w-1"><use href="#dots"/></svg></button>
        </div>
      </div>
    </section>
  </main>

  <footer class="flex h-[22px] shrink-0 items-center pl-[3px]">
    <svg class="mr-1 size-[13px]" viewBox="0 0 13 13"><path d="M6.500 0a6.500 6.500 0 0 1 5 10.500L12 13 9 12.500A6.500 6.500 0 1 1 6.500 0z" fill="#fff"/><path d="M5.600 2.500h2L7.200 7.500H6zM5.700 8.700h1.800v1.700H5.700z" fill="#191919"/></svg>
    <p class="flex-1 pt-0.5">Rebuilding Library because the asset database could not be found!</p>
    <div class="mt-0.5 flex h-5 divide-x divide-[#262626] border-x border-[#262626]">
      <button aria-label="Debugger" class="flex w-[26px] items-center justify-center"><svg class="size-3.5" viewBox="0 0 14 14"><path d="M7 2.500c3 0 3.800 2 3.800 5S9.500 13.500 7 13.500 3.200 11 3.200 7.500 4 2.500 7 2.500z" fill="currentColor"/><path d="M4.500 3L3 .5M9.500 3L11 .5M3.500 5.500L.8 3.500M3.500 8H0M3.500 10L1 13M10.500 5.500l2.700-2M10.500 8H14M10.500 10l2.500 3" stroke="currentColor" stroke-width="1.400"/><path d="M1.500 0L14 12.500" stroke="#191919" stroke-width="1.300"/><path d="M.5 1L13 13.500" stroke="currentColor" stroke-width="1.300"/></svg></button>
      <button aria-label="Cache server" class="flex w-[26px] items-center justify-center"><svg class="size-3.5" viewBox="0 0 14 14"><path d="M1.500 1.500Q7-.8 12.500 1.500v2Q7 5.800 1.500 3.500zM1.500 5Q7 7.500 12.500 5v3Q7 10.500 1.500 8zM1.500 9.800Q7 12.300 12.500 9.800v2.400Q7 15 1.500 12.200z" fill="currentColor"/><path d="M1.500 0L14 12.500" stroke="#191919" stroke-width="1.300"/><path d="M.5 1L13 13.500" stroke="currentColor" stroke-width="1.300"/></svg></button>
      <button aria-label="Auto lighting" class="flex w-[26px] items-center justify-center"><svg class="size-3.5" viewBox="0 0 14 14"><path d="M1.500 9A6 6 0 0 1 4 2M12.500 5A6 6 0 0 1 10 12M8.500 1q3 0 4.500 3M5.500 13q-3 0-4.500-3M12.800.5v3.500H9.500M1.200 13.500V10h3" fill="none" stroke="currentColor" stroke-width="1.300"/><path d="M7 3a3 3 0 0 1 1.700 5.500V11H5.300V8.500A3 3 0 0 1 7 3z" fill="currentColor"/><path d="M1.500 0L14 12.500" stroke="#191919" stroke-width="1.300"/><path d="M.5 1L13 13.500" stroke="currentColor" stroke-width="1.300"/></svg></button>
      <button aria-label="Background tasks" class="flex w-[26px] items-center justify-center"><svg class="size-3.5" viewBox="0 0 14 14" fill="none" stroke="currentColor" stroke-width="1.200"><circle cx="7" cy="7" r="6.300"/><path d="M4.200 6.500l2 2 3.600-3" stroke-width="1.500"/></svg></button>
    </div>
  </footer>
</div>
</div>
</body>
</html>
